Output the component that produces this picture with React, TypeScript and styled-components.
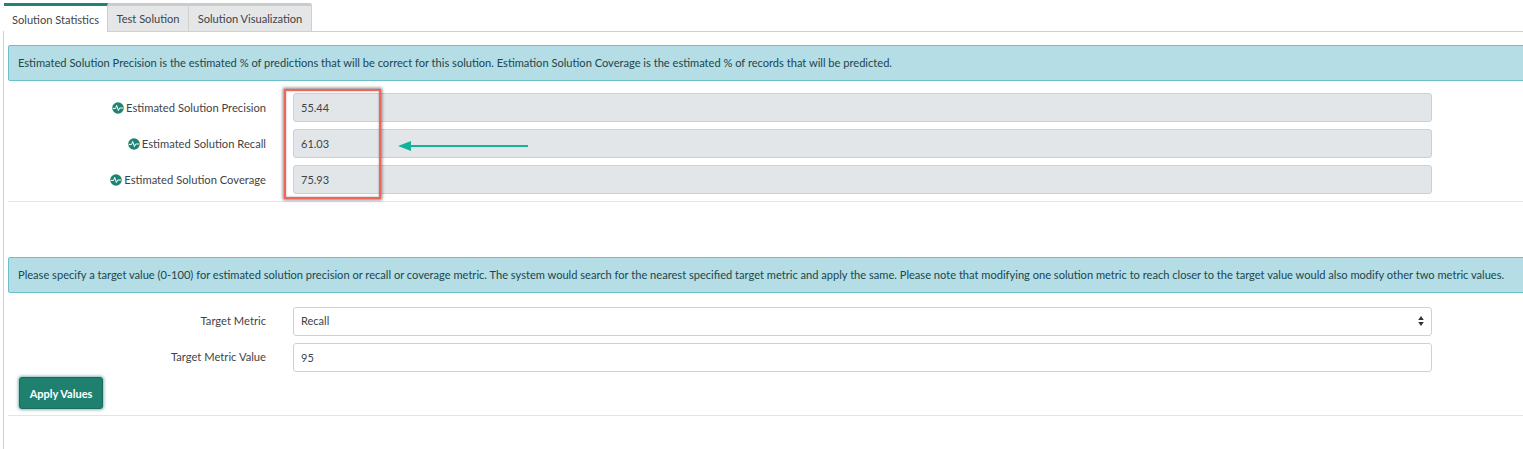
import React from 'react';
import styled, { createGlobalStyle } from 'styled-components';

const GlobalStyle = createGlobalStyle`
  html, body {
    margin: 0;
    padding: 0;
    background: #fff;
    color: #3c4043;
    font-family: Lato, "Open Sans", "Liberation Sans", sans-serif;
    font-size: 11.1px;
  }
`;

const Page = styled.div`
  position: relative;
  width: 1523px;
  height: 449px;
  overflow: hidden;
  box-sizing: border-box;
  padding: 3px 0 0 3px;
`;

const TabBar = styled.div`
  display: flex;
  height: 29px;
  box-sizing: border-box;
  border-bottom: 1px solid #d0d0d0;
  padding-left: 1px;
`;

const Tab = styled.div<{ $active?: boolean; $w: number; $last?: boolean }>`
  display: flex;
  align-items: center;
  justify-content: center;
  box-sizing: border-box;
  width: ${({ $w }) => $w}px;
  height: ${({ $active }) => ($active ? '29px' : '28px')};
  background: ${({ $active }) => ($active ? '#fff' : '#e4e6e8')};
  border-top: ${({ $active }) => ($active ? '3px solid #1f8272' : '3px solid #c9cbcd')};
  border-right: 1px solid #cfcfcf;
  color: #3f4447;
  font-size: 11.1px;
  border-top-right-radius: ${({ $last }) => ($last ? '2px' : '0')};
  position: relative;
  z-index: 1;
`;

const Panel = styled.div`
  border-left: 1px solid #d0d0d0;
  height: 420px;
  padding: 13px 0 0 4px;
  box-sizing: border-box;
`;

const Alert = styled.div`
  box-sizing: border-box;
  height: 36px;
  margin-right: -4px;
  padding: 0 9px 2px;
  display: flex;
  align-items: center;
  background: #b4dde5;
  border: 1px solid #6cc0cc;
  border-radius: 2px 0 0 2px;
  color: #20464e;
  font-size: 11.1px;
  white-space: nowrap;
`;

const Rows = styled.div<{ $top: number }>`
  display: flex;
  flex-direction: column;
  gap: 7px;
  padding-top: ${({ $top }) => $top}px;
`;

const Row = styled.div`
  display: flex;
  align-items: center;
  height: 29px;
`;

const Label = styled.label<{ $raised?: boolean }>`
  width: 258px;
  display: flex;
  justify-content: flex-end;
  align-items: center;
  gap: 2px;
  padding-bottom: ${({ $raised }) => ($raised ? '2px' : '0')};
  box-sizing: border-box;
  color: #3f4447;
  font-size: 11.2px;
  white-space: nowrap;
`;

const fieldBase = `
  box-sizing: border-box;
  width: 1139px;
  height: 29px;
  margin-left: 27px;
  padding: 0 7px;
  border-radius: 3px;
  font-family: inherit;
  font-size: 11px;
  color: #3f4447;
  outline: none;
`;

const ReadOnlyField = styled.input`
  ${fieldBase}
  background: #e3e6e9;
  border: 1px solid #cdd0d3;
`;

const TextField = styled.input`
  ${fieldBase}
  background: #fff;
  border: 1px solid #cfd2d5;
`;

const SelectBox = styled.div`
  ${fieldBase}
  padding-bottom: 2px;
  background: #fff;
  border: 1px solid #cfd2d5;
  display: flex;
  align-items: center;
  justify-content: space-between;
`;

const Divider = styled.hr<{ $top: number }>`
  border: 0;
  border-top: 1px solid #e4e4e4;
  margin: ${({ $top }) => $top}px 0 0;
`;

const SecondBlock = styled.div`
  margin-top: 55px;
`;

const ApplyButton = styled.button`
  display: block;
  box-sizing: border-box;
  width: 84px;
  height: 32px;
  margin: 5px 0 0 11px;
  background: #20806f;
  border: 1px solid #1a6b5d;
  border-radius: 3px;
  box-shadow: 0 0 3px 1px rgba(32, 128, 111, 0.55);
  color: #fff;
  font-family: inherit;
  font-size: 11px;
  font-weight: 700;
`;

const Highlight = styled.div`
  position: absolute;
  left: 284px;
  top: 89px;
  width: 97px;
  height: 110px;
  box-sizing: border-box;
  border: 2px solid #f0645a;
  box-shadow: 0 0 3px 1px rgba(60, 60, 60, 0.65), inset 0 0 2px rgba(60, 60, 60, 0.5);
`;

const ArrowMark = styled.svg`
  position: absolute;
  left: 397px;
  top: 139px;
`;

const PulseIcon = () => (
  <svg width="12" height="12" viewBox="0 0 12 12">
    <circle cx="6" cy="6" r="5.8" fill="#1f8272" />
    <path d="M.8 6.4h2.8l1.1-3 1.7 5.2 1.2-2.6h3.6" fill="none" stroke="#fff" strokeWidth="1" />
  </svg>
);

const metrics = [
  { label: 'Estimated Solution Precision', value: '55.44' },
  { label: 'Estimated Solution Recall', value: '61.03' },
  { label: 'Estimated Solution Coverage', value: '75.93' },
];

export default function App() {
  return (
    <Page>
      <GlobalStyle />
      <TabBar>
        <Tab $active $w={104}>Solution Statistics</Tab>
        <Tab $w={81}>Test Solution</Tab>
        <Tab $w={123} $last>Solution Visualization</Tab>
      </TabBar>
      <Panel>
        <Alert>
          Estimated Solution Precision is the estimated % of predictions that will be correct for this solution. Estimation Solution Coverage is the estimated % of records that will be predicted.
        </Alert>
        <Rows $top={12}>
          {metrics.map((m) => (
            <Row key={m.label}>
              <Label>
                <PulseIcon />
                {m.label}
              </Label>
              <ReadOnlyField readOnly value={m.value} />
            </Row>
          ))}
        </Rows>
        <Divider $top={7} />
        <SecondBlock>
          <Alert>
            Please specify a target value (0-100) for estimated solution precision or recall or coverage metric. The system would search for the nearest specified target metric and apply the same. Please note that modifying one solution metric to reach closer to the target value would also modify other two metric values.
          </Alert>
          <Rows $top={14}>
            <Row>
              <Label $raised>Target Metric</Label>
              <SelectBox>
                Recall
                <svg width="6" height="10" viewBox="0 0 6 10">
                  <path d="M3 0l2.8 4H.2zM3 10L.2 6h5.6z" fill="#333" />
                </svg>
              </SelectBox>
            </Row>
            <Row>
              <Label $raised>Target Metric Value</Label>
              <TextField readOnly value="95" />
            </Row>
          </Rows>
          <ApplyButton>Apply Values</ApplyButton>
          <Divider $top={6} />
        </SecondBlock>
      </Panel>
      <Highlight />
      <ArrowMark width="132" height="14" viewBox="0 0 132 14">
        <path d="M131 7H12" stroke="#12b39b" strokeWidth="2" />
        <path d="M1 7l13-5v10z" fill="#12b39b" />
      </ArrowMark>
    </Page>
  );
}
